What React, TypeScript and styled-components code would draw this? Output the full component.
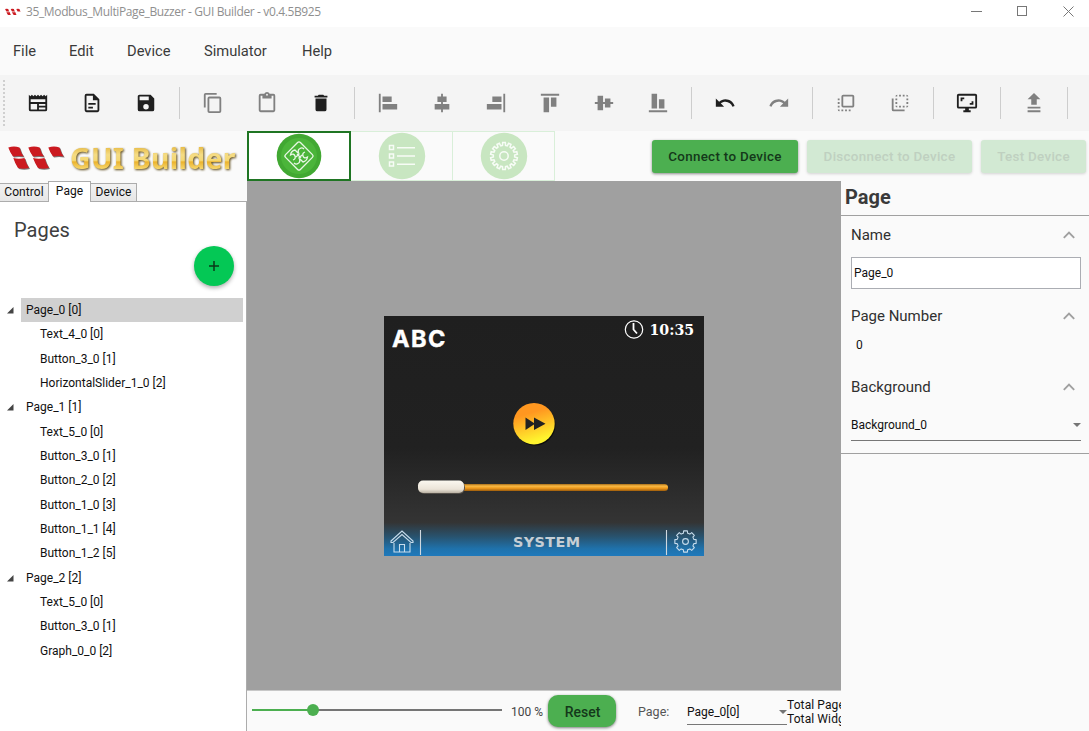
import React from "react";
import styled, { createGlobalStyle } from "styled-components";
import { MdFlipToBack, MdFlipToFront } from "react-icons/md";

const Global = createGlobalStyle`
  * { box-sizing: border-box; }
  body { margin: 0; overflow: hidden; font-family: Roboto, "Liberation Sans", sans-serif; color: #111; background: #fafafa; }
`;

const Window = styled.div`
  width: 1089px;
  height: 731px;
  display: flex;
  flex-direction: column;
  overflow: hidden;
  background: #fafafa;
`;

const TitleBar = styled.header`
  height: 27px;
  flex: none;
  display: flex;
  align-items: center;
  padding: 0 0 4px 5px;
  background: #fff;
`;
const TitleText = styled.span`
  flex: 1;
  margin-left: 5px;
  font: 12px "Open Sans", sans-serif;
  color: #8f8f8f;
  letter-spacing: -0.37px;
  white-space: nowrap;
`;
const WindowControl = styled.span`
  width: 46px;
  display: flex;
  justify-content: center;
  position: relative;
  left: 2px;
`;

const MenuBar = styled.nav`
  height: 48px;
  flex: none;
  display: flex;
  align-items: center;
  gap: 32px;
  padding-left: 13px;
  background: #fafafa;
`;
const MenuItem = styled.span<{ $w: number }>`
  width: ${(p) => p.$w}px;
  font-size: 14.7px;
  color: #3a3a3a;
  white-space: nowrap;
`;

const Toolbar = styled.div`
  height: 56px;
  flex: none;
  display: flex;
  align-items: center;
  background: #f4f4f4;
`;
const Grip = styled.span`
  width: 2px;
  height: 46px;
  margin: 0 6px 0 3px;
  background: repeating-linear-gradient(#cfcfcf 0 2px, transparent 2px 4px);
`;
const ToolButton = styled.span<{ $off?: boolean }>`
  width: 54px;
  height: 32px;
  display: flex;
  align-items: center;
  justify-content: center;
  color: ${(p) => (p.$off ? "#808080" : "#1f1f1f")};
  svg { width: 22px; height: 22px; display: block; }
`;
const ToolSeparator = styled.span`
  width: 1px;
  height: 32px;
  margin: 0 6px;
  background: #cdcdcd;
`;

const Body = styled.div`
  flex: 1;
  display: flex;
  min-height: 0;
`;
const LeftPanel = styled.aside`
  width: 247px;
  display: flex;
  flex-direction: column;
`;
const Brand = styled.div`
  height: 50px;
  display: flex;
  align-items: center;
  padding: 3px 0 0 8px;
`;
const BrandText = styled.span`
  margin-left: 5px;
  font: 700 28.5px/40px "Noto Sans", sans-serif;
  letter-spacing: 0.25px;
  white-space: nowrap;
  color: transparent;
  background: linear-gradient(#e9bf4c 24%, #f5dc84 42%, #f5d872 56%, #ecb32e 60%, #f7d970 78%);
  background-clip: text;
  filter: drop-shadow(1px 1px 0.8px #5d4a1a);
`;
const Tabs = styled.div`
  height: 21px;
  display: flex;
  align-items: flex-end;
  border-bottom: 1px solid #acacac;
`;
const Tab = styled.span<{ $w: number; $active?: boolean }>`
  width: ${(p) => p.$w}px;
  height: ${(p) => (p.$active ? 21 : 18)}px;
  margin: ${(p) => (p.$active ? "0 -1px -1px" : "0")};
  padding-bottom: ${(p) => (p.$active ? 3 : 1)}px;
  display: flex;
  justify-content: center;
  align-items: center;
  border: 1px solid #acacac;
  border-bottom: 0;
  background: ${(p) => (p.$active ? "#fff" : "linear-gradient(#f2f2f2, #e6e6e6)")};
  font-size: 12px;
  letter-spacing: 0.05px;
  z-index: ${(p) => (p.$active ? 1 : 0)};
  &:first-child { border-left: 0; }
`;
const PagesPane = styled.div`
  flex: 1;
  display: flex;
  flex-direction: column;
  background: #fff;
  border-right: 1px solid #acacac;
`;
const PagesTitle = styled.h2`
  margin: 15px 0 0 14px;
  font-size: 20px;
  line-height: 26px;
  font-weight: 400;
  letter-spacing: 0.1px;
  color: #404040;
`;
const AddButton = styled.button`
  width: 40px;
  height: 40px;
  margin: 3px 12px 0 auto;
  padding: 0;
  border: 0;
  border-radius: 50%;
  display: grid;
  place-items: center;
  background: #04c855;
  box-shadow: 0 2px 4px rgba(0, 0, 0, 0.32);
`;
const Tree = styled.div`
  margin-top: 12px;
`;
const TreeRow = styled.div`
  height: 24.34px;
  display: flex;
  align-items: flex-start;
`;
const Expander = styled.span`
  width: 21px;
  height: 24px;
  padding: 9px 0 0 7px;
  svg { display: block; }
`;
const TreeLabel = styled.span<{ $level: number; $selected?: boolean }>`
  flex: 1;
  height: 24px;
  margin-right: 3px;
  padding-left: ${(p) => (p.$level ? 19 : 5)}px;
  font-size: 12px;
  line-height: 24px;
  letter-spacing: 0;
  background: ${(p) => (p.$selected ? "#d0d0d0" : "transparent")};
`;

const Main = styled.div`
  flex: 1;
  display: flex;
  flex-direction: column;
  min-width: 0;
`;
const ActionRow = styled.div`
  height: 50px;
  display: flex;
  align-items: flex-start;
`;
const ModeTab = styled.span<{ $active?: boolean }>`
  width: ${(p) => (p.$active ? 104 : 102)}px;
  height: 50px;
  display: grid;
  place-items: center;
  border: ${(p) => (p.$active ? "2px solid #1f7523" : "1px solid #d9efd9")};
  border-left-width: ${(p) => (p.$active ? 2 : 0)}px;
  background: ${(p) => (p.$active ? "#fff" : "#fafafa")};
  svg { display: block; }
`;
const DeviceButtons = styled.div`
  margin: 9px 3px 0 auto;
  display: flex;
  gap: 9px;
`;
const RaisedButton = styled.button<{ $w: number; $off?: boolean }>`
  width: ${(p) => p.$w}px;
  height: 33px;
  padding: 0;
  border: 0;
  border-radius: 3px;
  font: 500 13.4px Roboto, sans-serif;
  letter-spacing: 0.3px;
  white-space: nowrap;
  color: ${(p) => (p.$off ? "#bfd0c0" : "#14381a")};
  background: ${(p) => (p.$off ? "#d2e9d3" : "#4caf50")};
  box-shadow: 0 1px 3px rgba(0, 0, 0, ${(p) => (p.$off ? 0.16 : 0.45)});
`;

const Workspace = styled.div`
  flex: 1;
  display: flex;
  min-height: 0;
`;
const Center = styled.section`
  width: 594px;
  flex: none;
  display: flex;
  flex-direction: column;
`;
const Stage = styled.div`
  height: 509px;
  display: flex;
  justify-content: center;
  align-items: center;
  background: #a0a0a0;
`;
const Screen = styled.div`
  position: relative;
  width: 320px;
  height: 240px;
  overflow: hidden;
  background: linear-gradient(#1f1f1f 0, #212121 55%, #343434 86%, #28536f 92%, #1f72ac 97%, #1f79bb 100%);
  svg { position: absolute; left: 0; top: 0; }
`;
const ScreenText = styled.span`
  position: absolute;
  left: 8px;
  top: 9px;
  font: 700 23.5px/28px Inter, sans-serif;
  letter-spacing: 1.5px;
  -webkit-text-stroke: 0.4px #fff;
  color: #fff;
`;
const ScreenClock = styled(ScreenText)`
  left: 265.5px;
  top: 4px;
  font: 700 14.2px/20px "DejaVu Serif", serif;
  letter-spacing: 0;
  -webkit-text-stroke: 0;
`;
const ScreenFooter = styled(ScreenText)`
  left: 129px;
  top: 216px;
  font: 700 14.4px/20px "DejaVu Sans", sans-serif;
  color: #c6cfd5;
  letter-spacing: 0.4px;
  -webkit-text-stroke: 0;
`;

const StatusBar = styled.footer`
  flex: 1;
  display: flex;
  align-items: flex-start;
  overflow: hidden;
  padding-left: 5px;
  font-size: 12px;
  border-top: 1px solid #c8c8c8;
  > * { flex: none; }
`;
const ZoomLabel = styled.span`
  width: 37px;
  margin: 14px 0 0 9px;
  line-height: 14px;
  color: #444;
  white-space: nowrap;
`;
const ResetButton = styled.button`
  width: 68px;
  height: 32px;
  margin-top: 4px;
  padding: 2px 0 0 1px;
  border: 0;
  border-radius: 10px;
  background: #4caf50;
  color: #14381a;
  font: 500 14px Roboto, sans-serif;
  box-shadow: 0 1px 3px rgba(0, 0, 0, 0.5);
`;
const PageLabel = styled.span`
  width: 49px;
  margin: 14px 0 0 22px;
  line-height: 14px;
  font-size: 12.5px;
  color: #555;
`;
const PageSelect = styled.div`
  width: 100px;
  height: 34px;
  display: flex;
  align-items: center;
  justify-content: space-between;
  padding-top: 8px;
  border-bottom: 1px solid #777;
`;
const Totals = styled.div`
  margin-top: 7px;
  line-height: 14px;
  white-space: nowrap;
  letter-spacing: 0.1px;
`;

const Properties = styled.aside`
  flex: 1;
  display: flex;
  flex-direction: column;
`;
const PropsTitle = styled.h1`
  height: 35px;
  margin: 0;
  padding: 2px 0 0 4px;
  font-size: 20px;
  line-height: 28px;
  font-weight: 700;
  color: #3a3a3a;
  border-bottom: 1px solid #a0a0a0;
`;
const PropsBody = styled.div`
  height: 238px;
  padding: 0 8px 0 10px;
  border-bottom: 1px solid #a0a0a0;
`;
const PropHead = styled.div<{ $top: number }>`
  height: 20px;
  margin-top: ${(p) => p.$top}px;
  padding-right: 6px;
  display: flex;
  align-items: center;
  justify-content: space-between;
  font-size: 15px;
  color: #303030;
`;
const NameInput = styled.div`
  height: 32px;
  margin-top: 12px;
  padding-left: 2px;
  border: 1px solid #abadb3;
  background: #fff;
  font-size: 12px;
  line-height: 30px;
`;
const PlainValue = styled.div`
  margin-top: 11px;
  padding-left: 5px;
  font-size: 12px;
  line-height: 16px;
`;
const BackgroundSelect = styled.div`
  height: 31px;
  margin-top: 13px;
  display: flex;
  align-items: center;
  justify-content: space-between;
  padding-bottom: 1px;
  border-bottom: 1px solid #777;
  font-size: 12px;
`;

const icons = {
  news: "M20,11H4V8H20M20,15H13V13H20M20,19H13V17H20M11,19H4V13H11M20.33,4.67L18.67,3L17,4.67L15.33,3L13.67,4.67L12,3L10.33,4.67L8.67,3L7,4.67L5.33,3L3.67,4.67L2,3V19A2,2 0 0,0 4,21H20A2,2 0 0,0 22,19V3L20.33,4.67Z",
  file: "M6,2A2,2 0 0,0 4,4V20A2,2 0 0,0 6,22H18A2,2 0 0,0 20,20V8L14,2H6M6,4H13V9H18V20H6V4M8,12V14H16V12H8M8,16V18H13V16H8Z",
  save: "M15,9H5V5H15M12,19A3,3 0 0,1 9,16A3,3 0 0,1 12,13A3,3 0 0,1 15,16A3,3 0 0,1 12,19M17,3H5C3.89,3 3,3.9 3,5V19A2,2 0 0,0 5,21H19A2,2 0 0,0 21,19V7L17,3Z",
  copy: "M19,21H8V7H19M19,5H8A2,2 0 0,0 6,7V21A2,2 0 0,0 8,23H19A2,2 0 0,0 21,21V7A2,2 0 0,0 19,5M16,1H4A2,2 0 0,0 2,3V17H4V3H16V1Z",
  paste: "M19,20H5V4H7V7H17V4H19M12,2A1,1 0 0,1 13,3A1,1 0 0,1 12,4A1,1 0 0,1 11,3A1,1 0 0,1 12,2M19,2H14.82C14.4,0.84 13.3,0 12,0C10.7,0 9.6,0.84 9.18,2H5A2,2 0 0,0 3,4V20A2,2 0 0,0 5,22H19A2,2 0 0,0 21,20V4A2,2 0 0,0 19,2Z",
  trash: "M19,4H15.5L14.5,3H9.5L8.5,4H5V6H19M6,19A2,2 0 0,0 8,21H16A2,2 0 0,0 18,19V7H6V19Z",
  left: "M2 2H4V22H2ZM6 5H16V11H6ZM6 13H22V19H6Z",
  hcenter: "M11 2H13V5H17V11H13V13H20V19H13V22H11V19H4V13H11V11H7V5H11Z",
  right: "M20 2H22V22H20ZM8 5H18V11H8ZM2 13H18V19H2Z",
  top: "M2 2H22V4H2ZM5 6H11V22H5ZM13 6H19V16H13Z",
  vcenter: "M2 11H5V4H11V11H13V7H19V11H22V13H19V17H13V13H11V20H5V13H2Z",
  bottom: "M2 20H22V22H2ZM5 2H11V18H5ZM13 8H19V18H13Z",
  undo: "M12.5,8C9.85,8 7.45,9 5.6,10.6L2,7V16H11L7.38,12.38C8.77,11.22 10.54,10.5 12.5,10.5C16.04,10.5 19.05,12.81 20.1,16L22.47,15.22C21.08,11.03 17.15,8 12.5,8Z",
  redo: "M18.4,10.6C16.55,9 14.15,8 11.5,8C6.85,8 2.92,11.03 1.54,15.22L3.9,16C4.95,12.81 7.95,10.5 11.5,10.5C13.45,10.5 15.23,11.22 16.62,12.38L13,16H22V7L18.4,10.6Z",
  monitor: "M9,6H5V10H7V8H9M19,10H17V12H15V14H19M21,16H3V4H21M21,2H3C1.89,2 1,2.89 1,4V16A2,2 0 0,0 3,18H10V20H8V22H16V20H14V18H21A2,2 0 0,0 23,16V4C23,2.89 22.1,2 21,2",
  upload: "M9 14V8H5L12 1L19 8H15V14ZM5 16H19V18H5ZM5 20H19V22H5Z",
};

type ToolProps = { name: keyof typeof icons; off?: boolean };
const Tool = ({ name, off }: ToolProps) => (
  <ToolButton $off={off}>
    <svg viewBox="0 0 24 24" fill="currentColor"><path fillRule="evenodd" d={icons[name]} /></svg>
  </ToolButton>
);

const SoftSvg = styled.svg<{ $soft?: boolean }>`
  flex: none;
  overflow: visible;
  filter: ${(p) => (p.$soft ? "drop-shadow(1px 1px 0.7px #777)" : "none")};
`;
const Winstar = ({ width, height, soft }: { width: number; height: number; soft?: boolean }) => (
  <SoftSvg $soft={soft} width={width} height={height} viewBox="0 0 57 24" fill="#cb1a20">
    <path d="M0.300 1.500Q6 -.3 11.500 1.500Q13 7 15.700 10.500Q10 9.500 5 10.500Q2 6.500 .3 1.500Z" />
    <path d="M20.300 1.500Q26 -.3 31.700 1.500Q33 7 36 10.500Q30 9.500 25 10.500Q22 6.500 20.300 1.500Z" />
    <path d="M40.300 1.500Q46 -.3 51.500 1.500Q53 7 55.700 10.500Q50 9.500 45 10.500Q42 6.500 40.300 1.500Z" />
    <path d="M5.300 12Q11 13.300 16.500 12Q18 17.500 21 22Q15 23.500 10 22Q7 17.500 5.300 12Z" />
    <path d="M25 12Q31 13.300 36.500 12Q38 17.500 41 22Q35 23.500 30 22Q27 17.500 25 12Z" />
  </SoftSvg>
);

const gearPath = (teeth: number, outer: number, inner: number) => {
  const pts: string[] = [];
  for (let i = 0; i < teeth; i++) {
    [[-0.32, inner], [-0.22, outer], [0.22, outer], [0.32, inner]].forEach(([o, r]) => {
      const a = ((i + o) / teeth) * Math.PI * 2 - Math.PI / 2;
      pts.push(`${(Math.cos(a) * r).toFixed(2)} ${(Math.sin(a) * r).toFixed(2)}`);
    });
  }
  return `M${pts.join("L")}Z`;
};

const Chevron = () => (
  <svg width="12" height="8" viewBox="0 0 12 8" fill="none" stroke="#a0a0a0" strokeWidth="1.9"><path d="M.8 6.800L6 1.600L11.200 6.800" /></svg>
);
const Caret = () => (
  <svg width="8" height="4" viewBox="0 0 8 4" fill="#757575"><path d="M0 0H8L4 4Z" /></svg>
);

const menus: [string, number][] = [["File", 24], ["Edit", 26], ["Device", 45], ["Simulator", 66], ["Help", 40]];

const tree: { label: string; level: number; selected?: boolean }[] = [
  { label: "Page_0 [0]", level: 0, selected: true },
  { label: "Text_4_0 [0]", level: 1 },
  { label: "Button_3_0 [1]", level: 1 },
  { label: "HorizontalSlider_1_0 [2]", level: 1 },
  { label: "Page_1 [1]", level: 0 },
  { label: "Text_5_0 [0]", level: 1 },
  { label: "Button_3_0 [1]", level: 1 },
  { label: "Button_2_0 [2]", level: 1 },
  { label: "Button_1_0 [3]", level: 1 },
  { label: "Button_1_1 [4]", level: 1 },
  { label: "Button_1_2 [5]", level: 1 },
  { label: "Page_2 [2]", level: 0 },
  { label: "Text_5_0 [0]", level: 1 },
  { label: "Button_3_0 [1]", level: 1 },
  { label: "Graph_0_0 [2]", level: 1 },
];

const DeviceScreen = () => (
  <Screen>
    <svg width="320" height="240" viewBox="0 0 320 240" fill="none">
      <defs>
        <linearGradient id="play" x1="0.3" y1="0" x2="0.6" y2="1">
          <stop offset="0.25" stopColor="#ff9720" /><stop offset="0.9" stopColor="#fff42e" />
        </linearGradient>
        <linearGradient id="track" x1="0" y1="0" x2="0" y2="1">
          <stop offset="0" stopColor="#a86d18" /><stop offset="0.3" stopColor="#f9ba45" /><stop offset="0.6" stopColor="#f09a1c" /><stop offset="1" stopColor="#9c5c0c" />
        </linearGradient>
        <linearGradient id="thumb" x1="0" y1="0" x2="0" y2="1">
          <stop offset="0" stopColor="#fbf8f0" /><stop offset="0.7" stopColor="#ebe4d8" /><stop offset="1" stopColor="#b9b1a2" />
        </linearGradient>
      </defs>
      <circle cx="250" cy="13.500" r="8.700" stroke="#fff" strokeWidth="1.200" />
      <path d="M249.500 7V13.500L253 17.500" stroke="#fff" strokeWidth="1.800" />
      <circle cx="151" cy="109" r="20.500" fill="#0c0c0c" />
      <circle cx="150" cy="107.700" r="20.700" fill="url(#play)" />
      <path d="M141.500 101.500L151 107.700L141.500 114ZM150 101.500L161.500 107.700L150 114Z" fill="#222" />
      <rect x="70" y="168" width="214" height="7" rx="3.500" fill="url(#track)" />
      <rect x="34.500" y="165.500" width="46.500" height="12.500" rx="6" fill="#55504a" />
      <rect x="34" y="164.500" width="46" height="12.500" rx="5" fill="url(#thumb)" />
      <path d="M36.500 214V239M282.500 214V239" stroke="#cfd8df" strokeWidth="1.100" />
      <g stroke="#c7dcec" strokeWidth="1.100">
        <path d="M7 225L18 215L29 225V226.500H27L18 218.500L9 226.500H7ZM10 227V236H26V227M15.500 236V228.500H20.500V236" />
        <g transform="translate(301.500 225.500)">
          <path d={gearPath(8, 10.800, 8.600)} strokeLinejoin="round" /><circle r="2.900" />
        </g>
      </g>
    </svg>
    <ScreenText>ABC</ScreenText>
    <ScreenClock>10:35</ScreenClock>
    <ScreenFooter>SYSTEM</ScreenFooter>
  </Screen>
);

export default function App() {
  return (
    <Window>
      <Global />
      <TitleBar>
        <Winstar width={16} height={8} />
        <TitleText>35_Modbus_MultiPage_Buzzer - GUI Builder - v0.4.5B925</TitleText>
        <WindowControl><svg width="11" height="11" stroke="#777" fill="none"><path d="M0 5.500H11" /></svg></WindowControl>
        <WindowControl><svg width="11" height="11" stroke="#777" fill="none"><rect x=".5" y=".5" width="9" height="9" /></svg></WindowControl>
        <WindowControl><svg width="11" height="11" stroke="#777" fill="none"><path d="M.5 .5L10.500 10.500M10.500 .5L.5 10.500" /></svg></WindowControl>
      </TitleBar>
      <MenuBar>{menus.map(([m, w]) => <MenuItem key={m} $w={w}>{m}</MenuItem>)}</MenuBar>
      <Toolbar>
        <Grip />
        <Tool name="news" /><Tool name="file" /><Tool name="save" />
        <ToolSeparator />
        <Tool name="copy" off /><Tool name="paste" off /><Tool name="trash" />
        <ToolSeparator />
        <Tool name="left" off /><Tool name="hcenter" off /><Tool name="right" off />
        <Tool name="top" off /><Tool name="vcenter" off /><Tool name="bottom" off />
        <ToolSeparator />
        <Tool name="undo" /><Tool name="redo" off />
        <ToolSeparator />
        <ToolButton $off><MdFlipToFront /></ToolButton>
        <ToolButton $off><MdFlipToBack /></ToolButton>
        <ToolSeparator />
        <Tool name="monitor" />
        <ToolSeparator />
        <Tool name="upload" off />
        <ToolSeparator />
      </Toolbar>
      <Body>
        <LeftPanel>
          <Brand>
            <Winstar width={57} height={24} soft />
            <BrandText>GUI Builder</BrandText>
          </Brand>
          <Tabs>
            <Tab $w={49}>Control</Tab>
            <Tab $w={43} $active>Page</Tab>
            <Tab $w={47}>Device</Tab>
          </Tabs>
          <PagesPane>
            <PagesTitle>Pages</PagesTitle>
            <AddButton>
              <svg width="10" height="10" viewBox="0 0 10 10" stroke="#0b3a19" strokeWidth="1.500"><path d="M0 5H10M5 0V10" /></svg>
            </AddButton>
            <Tree>
              {tree.map((n, i) => (
                <TreeRow key={i}>
                  <Expander>{n.level === 0 && <svg width="7" height="7" fill="#444"><path d="M0 6.500L6.500 0V6.500Z" /></svg>}</Expander>
                  <TreeLabel $level={n.level} $selected={n.selected}>{n.label}</TreeLabel>
                </TreeRow>
              ))}
            </Tree>
          </PagesPane>
        </LeftPanel>
        <Main>
          <ActionRow>
            <ModeTab $active>
              <svg width="46" height="46" viewBox="-23 -23 46 46" fill="none" stroke="#e9f7e6" strokeWidth="1.300">
                <circle r="22.300" fill="#41a832" stroke="none" />
                <circle r="18" fill="#4bb53a" stroke="none" />
                <rect x="-10.500" y="-10.500" width="21" height="21" rx="2" transform="rotate(45)" />
                <path d="M-1 -3L-4 -6Q-8 -5 -8.500 -1Q-5 -3 -4 0Q-3 3 -6 4M1 3L4 6Q8 5 8.500 1Q5 3 4 0Q3 -3 6 -4M-3 1L0 -2Q-2 -6 1 -7.500Q3 -9 5 -7M3 -1L0 2Q2 6 -1 7.500Q-3 9 -5 7M-2 -2L2 2" />
              </svg>
            </ModeTab>
            <ModeTab>
              <svg width="48" height="48" viewBox="-24 -24 48 48" fill="none" stroke="#f7fcf6" strokeWidth="1.500">
                <circle r="23.200" fill="#c8e6c1" stroke="none" />
                <path d="M-12.500 -10.500h4v4h-4zM-12.500 -2h4v4h-4zM-12.500 6h4v4h-4zM-5 -8.200H13M-5 0H13M-5 8.200H13" />
              </svg>
            </ModeTab>
            <ModeTab>
              <svg width="48" height="48" viewBox="-24 -24 48 48" fill="none" stroke="#f7fcf6" strokeWidth="1.500">
                <circle r="23.200" fill="#c8e6c1" stroke="none" />
                <path d={gearPath(14, 13.500, 10.700)} /><circle r="4.200" />
              </svg>
            </ModeTab>
            <DeviceButtons>
              <RaisedButton $w={146}>Connect to Device</RaisedButton>
              <RaisedButton $w={165} $off>Disconnect to Device</RaisedButton>
              <RaisedButton $w={105} $off>Test Device</RaisedButton>
            </DeviceButtons>
          </ActionRow>
          <Workspace>
            <Center>
              <Stage><DeviceScreen /></Stage>
              <StatusBar>
                <svg width="250" height="38" viewBox="0 0 250 38">
                  <path d="M61 19H250" stroke="#757575" strokeWidth="2" />
                  <path d="M0 19H61" stroke="#4caf50" strokeWidth="2" />
                  <circle cx="61" cy="19" r="6" fill="#4caf50" />
                </svg>
                <ZoomLabel>100 %</ZoomLabel>
                <ResetButton>Reset</ResetButton>
                <PageLabel>Page:</PageLabel>
                <PageSelect><span>Page_0[0]</span><Caret /></PageSelect>
                <Totals>Total Pages<br />Total Widgets</Totals>
              </StatusBar>
            </Center>
            <Properties>
              <PropsTitle>Page</PropsTitle>
              <PropsBody>
                <PropHead $top={9}>Name<Chevron /></PropHead>
                <NameInput>Page_0</NameInput>
                <PropHead $top={17}>Page Number<Chevron /></PropHead>
                <PlainValue>0</PlainValue>
                <PropHead $top={24}>Background<Chevron /></PropHead>
                <BackgroundSelect>Background_0<Caret /></BackgroundSelect>
              </PropsBody>
            </Properties>
          </Workspace>
        </Main>
      </Body>
    </Window>
  );
}
